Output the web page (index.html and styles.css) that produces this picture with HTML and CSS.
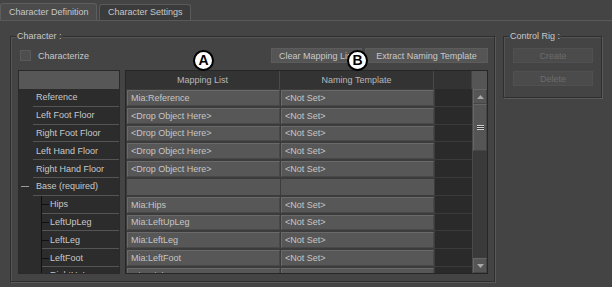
FILE: index.html
```html
<!DOCTYPE html>
<html>
<head>
<meta charset="utf-8">
<link rel="stylesheet" href="styles.css">
</head>
<body>
<div class="tabs">
  <div class="tab active">Character Definition</div>
  <div class="tab">Character Settings</div>
</div>
<div class="pane">
  <div class="group character">
    <span class="legend">Character :</span>
    <div class="toolbar">
      <label class="check"><span class="box"></span>Characterize</label>
      <div class="buttons">
        <button class="btn clear">Clear Mapping List</button>
        <button class="btn extract">Extract Naming Template</button>
      </div>
    </div>
    <div class="lists">
      <div class="tree">
        <div class="tree-head"></div>
        <div class="tree-body">
          <div class="trow top"><span class="tlabel">Reference</span></div>
          <div class="trow top"><span class="tlabel">Left Foot Floor</span></div>
          <div class="trow top"><span class="tlabel">Right Foot Floor</span></div>
          <div class="trow top"><span class="tlabel">Left Hand Floor</span></div>
          <div class="trow top"><span class="tlabel">Right Hand Floor</span></div>
          <div class="trow base"><span class="minus"></span><span class="tlabel">Base (required)</span></div>
          <div class="trow child"><span class="tlabel"><span class="conn"></span>Hips</span></div>
          <div class="trow child"><span class="tlabel"><span class="conn"></span>LeftUpLeg</span></div>
          <div class="trow child"><span class="tlabel"><span class="conn"></span>LeftLeg</span></div>
          <div class="trow child"><span class="tlabel"><span class="conn"></span>LeftFoot</span></div>
          <div class="trow child"><span class="tlabel"><span class="conn"></span>RightUpLeg</span></div>
        </div>
      </div>
      <div class="table">
        <div class="thead">
          <div class="th">Mapping List</div>
          <div class="th">Naming Template</div>
          <div class="th empty"></div>
          <div class="th scrollhead"></div>
        </div>
        <div class="tbody">
          <div class="rows">
            <div class="row"><div class="cell">Mia:Reference</div><div class="cell">&lt;Not Set&gt;</div><div class="blank"></div></div>
            <div class="row"><div class="cell">&lt;Drop Object Here&gt;</div><div class="cell">&lt;Not Set&gt;</div><div class="blank"></div></div>
            <div class="row"><div class="cell">&lt;Drop Object Here&gt;</div><div class="cell">&lt;Not Set&gt;</div><div class="blank"></div></div>
            <div class="row"><div class="cell">&lt;Drop Object Here&gt;</div><div class="cell">&lt;Not Set&gt;</div><div class="blank"></div></div>
            <div class="row"><div class="cell">&lt;Drop Object Here&gt;</div><div class="cell">&lt;Not Set&gt;</div><div class="blank"></div></div>
            <div class="row"><div class="cell flat"></div><div class="cell flat"></div><div class="blank"></div></div>
            <div class="row"><div class="cell">Mia:Hips</div><div class="cell">&lt;Not Set&gt;</div><div class="blank"></div></div>
            <div class="row"><div class="cell">Mia:LeftUpLeg</div><div class="cell">&lt;Not Set&gt;</div><div class="blank"></div></div>
            <div class="row"><div class="cell">Mia:LeftLeg</div><div class="cell">&lt;Not Set&gt;</div><div class="blank"></div></div>
            <div class="row"><div class="cell">Mia:LeftFoot</div><div class="cell">&lt;Not Set&gt;</div><div class="blank"></div></div>
            <div class="row"><div class="cell">Mia:RightUpLeg</div><div class="cell">&lt;Not Set&gt;</div><div class="blank"></div></div>
          </div>
          <div class="scrollbar">
            <div class="sbtn"><svg width="7" height="4" viewBox="0 0 7 4"><polygon points="0,4 3.5,0 7,4" fill="#a8a8a8"/></svg></div>
            <div class="thumb"><span class="grip"></span></div>
            <div class="track"></div>
            <div class="sbtn"><svg width="7" height="4" viewBox="0 0 7 4"><polygon points="0,0 3.5,4 7,0" fill="#a8a8a8"/></svg></div>
          </div>
        </div>
      </div>
    </div>
    <span class="marker a">A</span>
    <span class="marker b">B</span>
  </div>
  <div class="group rig">
    <span class="legend">Control Rig :</span>
    <button class="btn disabled">Create</button>
    <button class="btn disabled">Delete</button>
  </div>
</div>
</body>
</html>
```

FILE: styles.css
```css
* { box-sizing: border-box; }
html, body { margin: 0; padding: 0; }
body {
  background: #444444;
  font-family: "Liberation Sans", Arial, sans-serif;
  font-size: 9px;
  color: #c8c8c8;
  width: 612px;
  height: 287px;
  overflow: hidden;
}

/* Tabs */
.tabs {
  display: flex;
  align-items: flex-end;
  height: 20px;
}
.tab {
  height: 16px;
  width: 92px;
  margin-left: 2px;
  padding-left: 8px;
  line-height: 15px;
  background: #3b3b3b;
  border: 1px solid #5a5a5a;
  border-bottom: none;
  border-radius: 3px 3px 0 0;
  white-space: nowrap;
}
.tab.active {
  height: 17px;
  width: 97px;
  margin-left: 0;
  background: #4b4b4b;
  border-color: #5e5e5e;
  line-height: 16px;
}

/* Pane */
.pane {
  border-top: 1px solid #5a5a5a;
  display: flex;
  align-items: flex-start;
  padding: 15px 0 0 10px;
}

.group {
  position: relative;
  border: 1px solid #2e2e2e;
  box-shadow: 1px 1px 0 #5a5a5a, inset 1px 1px 0 #555;
}
.legend {
  position: absolute;
  top: -7px;
  left: 5px;
  padding: 0 1px;
  background: #444444;
  line-height: 12px;
  white-space: nowrap;
}

.character {
  width: 485px;
  height: 246px;
  padding: 11px 6px 0 7px;
}

.toolbar {
  display: flex;
  align-items: center;
  height: 15px;
}
.check {
  display: flex;
  align-items: center;
}
.box {
  width: 11px;
  height: 11px;
  margin-left: 2px;
  margin-right: 7px;
  background: #4e4e4e;
  border: 1px solid #5a5a5a;
}
.buttons {
  margin-left: auto;
  display: flex;
  gap: 3px;
}
.btn {
  font-family: "Liberation Sans", Arial, sans-serif;
  font-size: 9px;
  color: #c8c8c8;
  height: 15px;
  padding: 0;
  background: #555555;
  border: 1px solid #5c5c5c;
  white-space: nowrap;
  display: block;
}
.clear { width: 91px; }
.extract { width: 123px; }

/* Lists */
.lists {
  display: flex;
  margin-top: 7px;
  height: 204px;
}
.tree {
  width: 103px;
  border: 1px solid #2a2a2a;
  background: #2c2c2c;
  display: flex;
  flex-direction: column;
}
.tree-head {
  height: 18px;
  background: #575757;
  flex: none;
}
.tree-body {
  height: 184px;
  overflow: hidden;
}
.trow {
  height: 17.8px;
  display: flex;
  align-items: stretch;
  color: #c8c8c8;
}
.tlabel {
  flex: 1;
  display: flex;
  align-items: center;
  border-bottom: 1px solid #555;
  white-space: nowrap;
}
.trow.top { padding-left: 14px; }
.trow.top .tlabel { padding-left: 3px; }
.trow.base { padding-left: 0; }
.minus {
  width: 14px;
  display: flex;
  align-items: center;
  padding-left: 2px;
}
.minus::before {
  content: "";
  display: block;
  width: 8px;
  height: 1px;
  background: #9a9a9a;
}
.trow.base .tlabel { padding-left: 3px; }
.trow.child { padding-left: 22px; }
.conn {
  align-self: stretch;
  width: 9px;
  margin-bottom: -1px;
  border-left: 1px solid #101010;
  background: linear-gradient(#101010, #101010) no-repeat 0 50% / 7px 1px;
}

.table {
  margin-left: 5px;
  width: 363px;
  border: 1px solid #262626;
  display: flex;
  flex-direction: column;
}
.thead {
  display: grid;
  grid-template-columns: 154px 154px 38px 15px;
  height: 18px;
  flex: none;
  background: #333333;
}
.th {
  display: flex;
  align-items: center;
  justify-content: center;
  color: #b8b8b8;
  border-right: 1px solid #4a4a4a;
}
.th.empty { border-right: 1px solid #444; }
.th.scrollhead { background: #555555; border-right: none; }

.tbody {
  display: flex;
  height: 184px;
}
.rows {
  width: 346px;
  overflow: hidden;
  background: #3c3c3c;
}
.row {
  display: grid;
  grid-template-columns: 154px 154px 38px;
  height: 17.8px;
}
.cell {
  margin: 1px 0 1px 1px;
  background: #575757;
  border: 1px solid;
  border-color: #6a6a6a #484848 #484848 #6a6a6a;
  padding-left: 3px;
  display: flex;
  align-items: center;
  color: #c6c6c6;
  white-space: nowrap;
  overflow: hidden;
}
.cell.flat {
  background: #565656;
  border-color: #565656;
}
.blank {
  background: #2a2a2a;
  border-left: 1px solid #3c3c3c;
  border-bottom: 1px solid #3a3a3a;
}

.scrollbar {
  width: 15px;
  display: flex;
  flex-direction: column;
  background: #3a3a3a;
  border-left: 1px solid #4a4a4a;
}
.sbtn {
  height: 15px;
  flex: none;
  background: #555555;
  border: 1px solid;
  border-color: #666 #454545 #454545 #666;
  display: flex;
  align-items: center;
  justify-content: center;
}
.thumb {
  height: 47px;
  flex: none;
  background: #555555;
  border: 1px solid;
  border-color: #666 #454545 #454545 #666;
  display: flex;
  align-items: center;
  justify-content: center;
}
.grip {
  width: 7px;
  height: 5px;
  background: repeating-linear-gradient(#cfcfcf 0 1px, #333 1px 2px);
}
.track { flex: 1; }

/* Markers */
.marker {
  position: absolute;
  top: 13px;
  width: 21px;
  height: 21px;
  border-radius: 50%;
  border: 2px solid #000;
  background: #fff;
  color: #000;
  font-family: "Liberation Sans", Arial, sans-serif;
  font-weight: bold;
  font-size: 14px;
  line-height: 17px;
  text-align: center;
}
.marker.a { left: 182px; }
.marker.b { left: 336px; }

/* Control Rig */
.rig {
  margin-left: 8px;
  width: 99px;
  height: 62px;
  padding: 11px 0 0 9px;
}
.btn.disabled {
  width: 80px;
  background: #4b4b4b;
  border-color: #505050;
  color: #6c6c6c;
}
.btn.disabled + .btn.disabled { margin-top: 8px; }
```
